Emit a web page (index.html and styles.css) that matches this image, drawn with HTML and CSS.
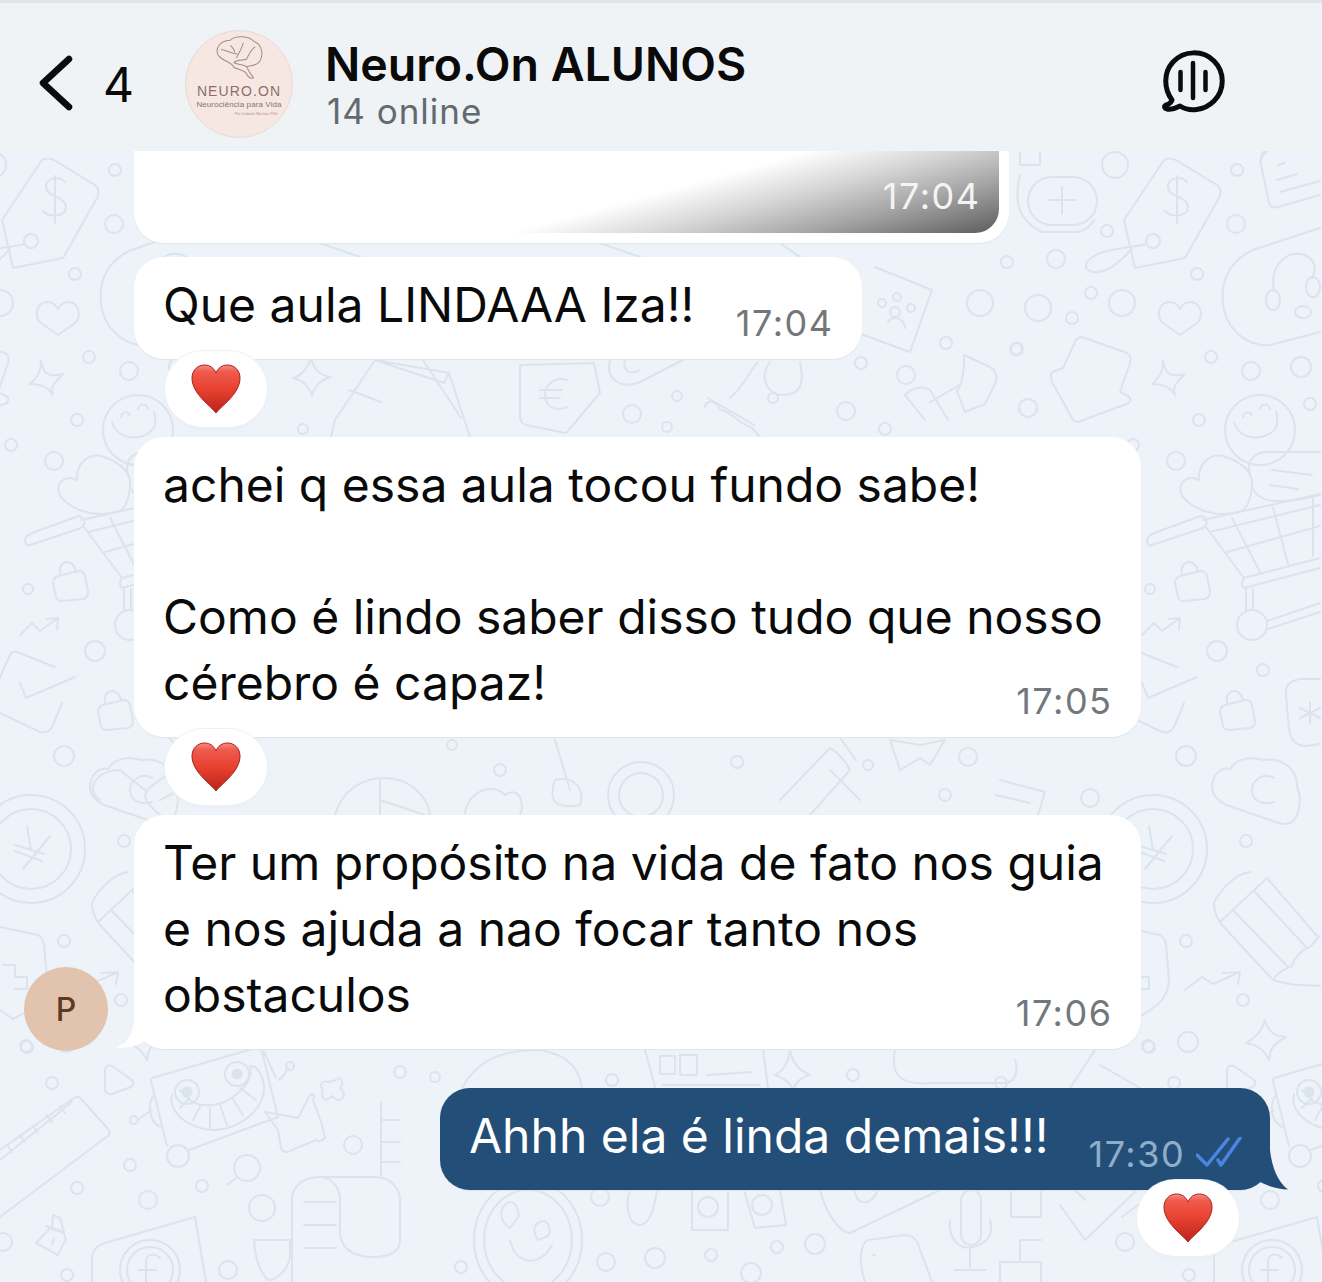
FILE: index.html
```html
<!DOCTYPE html>
<html lang="pt-BR">
<head>
<meta charset="utf-8">
<title>Neuro.On ALUNOS</title>
<link rel="stylesheet" href="styles.css">
</head>
<body>
<div class="phone">
  <header class="top">
    <svg class="chev" width="36" height="60" viewBox="0 0 36 60"><path d="M31 5 L5 29 L31 53" /></svg>
    <span class="count">4</span>
    <div class="logo">
      <svg class="brain" width="56" height="48" viewBox="0 0 62 56">
        <path d="M7 24C2 15 10 6 21 6C27 0 43 1 49 8C58 11 60 24 55 31C51 37 44 35 40 37C42 42 45 46 48 50C44 52 41 48 39 44C36 41 30 40 25 38C24 32 13 31 7 24Z"/>
        <path d="M10 17C17 18 23 22 29 22M36 9C35 15 31 20 28 27M50 14C45 16 43 22 40 28C36 30 30 28 25 32M21 12C24 15 26 17 26 20M25 32C28 35 36 34 40 37"/>
      </svg>
      <span class="logo-a">NEURO.ON</span>
      <span class="logo-b">Neurociência para Vida</span>
      <span class="logo-c">Por Izabela Martins PhD</span>
    </div>
    <div class="titles">
      <h1>Neuro.On ALUNOS</h1>
      <p>14 online</p>
    </div>
    <svg class="voice" width="66" height="66" viewBox="0 0 66 66">
      <path d="M12 52 C4 41 3 25 13 14 C24 2 43 2 54 13 C65 24 65 42 54 53 C44 63 29 64 20 58 C16 60 11 62 7 61 C4 60 4 58 6 57 C10 56 12 53 12 52Z"/>
      <path class="bars" d="M20.500 24V42M33 15V50M45.500 24V42"/>
    </svg>
  </header>

  <main class="chat">
    <svg class="doodles" viewBox="0 151 1322 1131" width="1322" height="1131" aria-hidden="true">
      <defs>
        <g id="tile">
          <path d="M2 220L42 160Q48 157 54 160L95 185Q101 190 97 198L63 258L13 268Z"/>
          <path d="M65 182C60 176 47 177 46 186C45 197 66 196 66 207C66 217 49 218 43 211M55 176V223"/>
          <circle cx="31" cy="241" r="7"/>
          <path d="M25 244C4 249 -24 248 -35 262C-40 273 -25 275 -12 268C-2 262 4 255 10 249"/>
          <circle cx="-7" cy="165" r="13"/><circle cx="115" cy="170" r="6"/><circle cx="114" cy="224" r="9"/><circle cx="-15" cy="231" r="6"/><circle cx="-66" cy="259" r="9"/><circle cx="-115" cy="262" r="6"/><circle cx="75" cy="274" r="6"/><circle cx="-31" cy="293" r="6"/><circle cx="0" cy="303" r="13"/><circle cx="-84" cy="308" r="13"/><circle cx="-50" cy="318" r="6"/><circle cx="-106" cy="349" r="6"/><circle cx="89" cy="357" r="6"/><circle cx="129" cy="371" r="9"/><circle cx="179" cy="367" r="10"/><circle cx="-94" cy="408" r="9"/><circle cx="77" cy="420" r="6"/><circle cx="188" cy="404" r="6"/>
          <path d="M58 335L41 323C34 317 36 303 47 302C53 302 56 305 58 309C60 305 64 302 69 302C79 303 82 316 75 323Z"/>
          <path d="M41 361C43 372 46 378 63 374C54 383 50 387 53 395C49 388 43 384 30 384C37 378 41 372 41 361Z"/>
          <rect x="-94" y="177" width="69" height="48" rx="24"/><path d="M-60 187V214M-74 200H-47"/>
          <path d="M-102 175C-108 200 -105 220 -80 232H-45C-35 230 -32 226 -28 220"/>
          <path d="M140 160Q137 152 146 150L198 150M146 150L138 160L147 203Q149 209 156 207L198 195M156 165L163 163M155 180L175 174M158 192L198 181"/>
          <path d="M198 228L131 250C105 262 97 285 102 310C108 333 128 347 148 345L198 332"/>
          <path d="M152 290C147 265 165 252 178 254C192 256 196 268 190 278"/>
          <ellipse cx="151" cy="300" rx="7" ry="10"/><ellipse cx="191" cy="287" rx="7" ry="10"/><ellipse cx="181" cy="312" rx="8" ry="6"/>
          <path d="M-70 372L-59 368L-47 342Q-44 335 -37 338L5 353Q10 356 8 363L-2 392L6 396Q10 398 7 403L-44 422Q-48 422 -50 418L-70 382Q-72 376 -70 372Z"/>
          <circle cx="138" cy="430" r="35"/><path d="M112 422C118 441 143 442 154 428C156 422 155 415 154 412M121 417C122 411 129 411 130 416M138 409C140 403 146 403 148 409"/>
          <path d="M66 502C50 490 62 472 77 480C76 462 90 452 104 457C118 462 131 470 130 485C129 500 125 510 117 512C100 516 80 514 66 502Z"/>
          <path d="M128 476C124 460 132 452 146 452H198M130 487C135 500 150 507 198 495M150 470L190 475M148 485L176 489"/>
          <path d="M30 545L81 528Q86 524 84 520Q80 514 76 517L32 533Q24 537 25 541Q26 547 30 545Z"/>
          <path d="M81 520L198 494M84 527L122 578L198 558M88 532L198 505M122 588L198 568M122 578Q118 585 122 588M110 518L138 572M151 508L166 564M191 496V556M105 552L198 526"/>
          <circle cx="130" cy="625" r="15"/><path d="M124 589V610M131 589V610M145 621L198 603M146 629L198 612"/>
          <circle cx="54" cy="461" r="9"/><circle cx="28" cy="589" r="5"/><circle cx="95" cy="651" r="10"/><circle cx="141" cy="670" r="6"/><circle cx="64" cy="756" r="10"/><circle cx="124" cy="841" r="6"/><circle cx="64" cy="941" r="6"/><circle cx="121" cy="1000" r="6"/><circle cx="66" cy="1042" r="10"/><circle cx="26" cy="1046" r="6"/>
          <circle cx="11" cy="445" r="6"/>
          <g id="lock"><path d="M58 576L78 571Q84 571 85 576L88 592Q88 598 83 599L62 601Q57 601 56 597L53 583Q53 578 58 576ZM60 574C58 562 68 560 72 564C74 566 76 570 76 572"/></g>
          <use href="#lock" x="45" y="129"/>
          <path d="M20 635L32 623L40 631L58 618M47 619L58 618L57 630"/>
          <path d="M55 667L17 652Q12 651 10 655L-10 700M-10 708L40 732Q48 734 52 727L62 703M20 683L26 698L75 677"/>
          <circle cx="31" cy="849" r="54"/><circle cx="31" cy="849" r="40"/>
          <path d="M27 826L31 850M50 836L23 869M15 845L44 854M15 851L42 861"/>
          <path d="M0 927L38 935Q43 938 44 944L47 980C47 1000 30 1010 13 1019L0 1010"/>
          <path d="M3 965H15V977H27V989H15"/>
          <path d="M128 872C112 874 97 892 92 903C92 912 96 920 100 925L151 980C165 985 180 985 198 986M145 878L195 936M98 922L145 878M111 910L165 966M133 892L185 948M151 980C155 972 165 968 170 966C172 958 180 950 185 948C190 948 192 940 198 936"/>
          <path d="M90 787C90 774 100 767 108 769C115 757 130 757 142 760C158 757 176 768 175 787C180 797 178 815 170 822C164 825 160 825 154 822L104 805C95 800 90 795 90 787Z"/>
          <path d="M152 778C142 772 130 780 130 790C130 802 142 805 152 802"/>
          <path d="M198 679H178Q162 682 164 695L167 730Q170 746 184 746L198 744M188 702V724M178 708L198 718M178 718L198 708"/>
          <path d="M63 990L80 977L91 984L118 972M101 973L118 972L116 984"/>
          <path d="M143 1020C146 1030 150 1036 164 1037C153 1043 148 1048 147 1060C142 1050 136 1045 124 1043C134 1038 140 1031 143 1020Z"/>
          <path d="M105 1070Q106 1064 112 1066L132 1080Q135 1083 131 1087L112 1094Q105 1095 105 1089Z"/>
          <circle cx="27" cy="1047" r="6"/><circle cx="52" cy="1083" r="6"/><circle cx="130" cy="1165" r="6"/><circle cx="77" cy="1188" r="6"/><circle cx="148" cy="1200" r="9"/><circle cx="202" cy="1186" r="6"/><circle cx="262" cy="1208" r="13"/><circle cx="353" cy="1145" r="9"/><circle cx="67" cy="1275" r="6"/><circle cx="228" cy="1270" r="9"/><circle cx="3" cy="1242" r="9"/><circle cx="178" cy="1156" r="11"/>
          <path d="M152 1078L256 1048Q261 1047 262 1052L278 1117L189 1150M167 1146L152 1085Q150 1080 152 1078M153 1096C148 1105 148 1120 160 1127M264 1052L276 1078M279 1080C284 1076 286 1072 288 1068M152 1110L140 1118"/>
          <circle cx="290" cy="1066" r="4"/><circle cx="134" cy="1120" r="4"/>
          <circle cx="187" cy="1092" r="12"/><circle cx="187" cy="1092" r="4.500" class="fill"/><circle cx="237" cy="1074" r="12"/><circle cx="237" cy="1074" r="4.500" class="fill"/>
          <path d="M172 1094C168 1110 185 1128 212 1130C240 1130 266 1108 264 1085C262 1072 255 1065 250 1066C254 1080 240 1095 222 1103C205 1108 190 1105 180 1090M180 1108L190 1098M193 1120L201 1105M210 1128V1108M227 1125L220 1105M243 1115L232 1098M256 1100L240 1088"/>
          <path d="M265 1112L298 1118L310 1095Q316 1092 313 1100L322 1125L325 1138Q320 1143 316 1140L292 1150Q284 1155 281 1148L278 1130Z"/>
          <path d="M328 1082L336 1080C340 1075 345 1082 340 1088C346 1092 345 1100 337 1100L332 1096C325 1103 320 1098 323 1090C319 1085 322 1080 328 1082Z"/>
          <path d="M0 1150L74 1098Q79 1095 82 1100L109 1130Q111 1136 105 1138L0 1217M0 1160L72 1102M12 1152L7 1145M25 1142L20 1135M38 1133L33 1126M52 1122L46 1115M65 1113L60 1106"/>
          <path d="M46 1226L64 1232L60 1218L53 1215L52 1230M36 1243L50 1228L64 1233L66 1240C62 1245 60 1252 58 1255ZM52 1244L54 1238"/>
          <circle cx="247" cy="1168" r="13"/><path d="M237 1177L227 1185"/>
          <path d="M92 1282V1256Q94 1246 105 1243L195 1217L206 1282"/>
          <circle cx="150" cy="1270" r="30"/><circle cx="150" cy="1270" r="23"/>
          <path d="M160 1258C154 1252 146 1254 146 1262V1282M139 1270H156"/>
          <path d="M292 1282V1200C292 1186 303 1177 320 1177H375C392 1177 400 1190 400 1200V1240C400 1250 392 1257 372 1257C350 1257 340 1245 340 1232V1200C340 1186 330 1177 320 1177M304 1202H336M304 1225H336M304 1248H336M381 1102V1177M381 1120H400M381 1142H400M381 1162H400"/>
          <path d="M254 1240H290V1256C288 1272 275 1280 268 1280C260 1272 255 1260 254 1240Z"/>
        </g>
      </defs>
      <use href="#tile"/>
      <use href="#tile" x="1122"/>
      <g>
        <path d="M311 357C313 368 318 375 331 377C320 380 315 386 312 396C309 386 303 380 293 378C303 375 308 368 311 357Z"/>
        <path d="M375 360L449 373L444 383L375 360M449 373L470 437M375 360L335 420L331 437M349 390L381 402"/>
        <path d="M423 360L461 418M520 365L594 363L600 393L566 433L526 425Q520 423 520 417Z"/>
        <path d="M567 380C555 376 545 385 545 395C545 407 556 412 567 407M540 390H562M540 398H560"/>
        <path d="M610 360C605 378 620 390 640 382L683 360M625 360C622 370 630 376 640 370"/>
        <circle cx="303" cy="429" r="5"/><circle cx="632" cy="414" r="9"/><circle cx="677" cy="396" r="5"/><circle cx="667" cy="427" r="5"/><circle cx="773" cy="398" r="5"/><circle cx="846" cy="411" r="9"/><circle cx="861" cy="363" r="6"/><circle cx="906" cy="375" r="9"/><circle cx="946" cy="343" r="6"/><circle cx="1017" cy="349" r="6"/><circle cx="1028" cy="408" r="9"/><circle cx="885" cy="429" r="6"/><circle cx="980" cy="303" r="13"/>
        <path d="M708 398L754 425M704 408C708 398 716 400 720 410C730 410 736 422 752 428L760 437M758 362C750 370 745 385 730 398M770 362C760 375 765 392 780 395C800 396 805 385 800 362"/>
        <path d="M964 355L990 367Q998 372 996 382L985 404L965 412L957 392Q965 378 964 355ZM905 395C912 388 922 385 930 390L948 420M930 402L960 385M905 395L925 420"/>
        <path d="M875 267L932 290L910 352L850 330"/><circle cx="895" cy="312" r="5"/><circle cx="882" cy="303" r="4"/><circle cx="897" cy="297" r="4"/><circle cx="911" cy="308" r="4"/><path d="M888 322C892 315 905 318 905 328"/>
        <path d="M210 775L160 800M180 765C150 790 130 790 160 815M100 800C85 790 95 770 120 770L145 790"/>
        <path d="M335 815C342 790 362 778 385 778C408 778 428 795 430 815M380 779V815M380 800L425 815"/>
        <circle cx="452" cy="745" r="5"/><circle cx="500" cy="770" r="6"/><path d="M465 815C465 795 490 780 505 795C520 785 525 805 520 815M555 780C548 800 555 810 580 805C585 790 575 775 555 780M555 740L570 790"/>
        <circle cx="641" cy="795" r="33"/><circle cx="641" cy="795" r="22"/><circle cx="737" cy="762" r="6"/><circle cx="868" cy="765" r="5"/><circle cx="968" cy="757" r="9"/><circle cx="1090" cy="798" r="9"/><circle cx="945" cy="795" r="6"/>
        <path d="M780 800L830 748C835 750 845 760 850 770L810 815M830 770L860 800M840 738L856 760"/>
        <path d="M890 740L920 745L945 740L930 765L920 758L900 770Z"/>
        <path d="M1000 780L1045 792L1038 815M996 795L1030 803"/>
        <circle cx="400" cy="1072" r="6"/><circle cx="435" cy="1077" r="5"/><circle cx="612" cy="1080" r="6"/><circle cx="853" cy="1075" r="6"/><circle cx="1001" cy="1083" r="6"/><circle cx="606" cy="1262" r="9"/><circle cx="655" cy="1258" r="10"/><circle cx="711" cy="1255" r="6"/><circle cx="777" cy="1247" r="6"/><circle cx="815" cy="1244" r="10"/><circle cx="751" cy="1273" r="10"/><circle cx="461" cy="1267" r="6"/><circle cx="600" cy="1197" r="9"/>
        <path d="M462 1088C480 1055 510 1050 540 1050C570 1055 580 1070 582 1088"/>
        <ellipse cx="528" cy="1240" rx="54" ry="60"/><ellipse cx="528" cy="1240" rx="44" ry="50"/>
        <path d="M507 1203C515 1198 520 1212 518 1218L510 1228C500 1222 498 1210 507 1203ZM540 1222C548 1218 552 1230 548 1236L538 1240C532 1232 534 1224 540 1222ZM510 1240C515 1265 540 1268 552 1245"/>
        <path d="M645 1050L655 1087M763 1050L768 1088M660 1056H675V1074H660ZM680 1055H697V1075H680ZM707 1075L751 1072M663 1085H760"/>
        <path d="M790 1050C792 1062 798 1070 810 1075C798 1078 795 1085 793 1090C790 1082 784 1078 775 1075C785 1070 788 1062 790 1050Z"/>
        <path d="M895 1050C890 1075 900 1085 930 1083H1000C1012 1085 1020 1075 1015 1060M1095 1050L1070 1088M1100 1065L1140 1088"/>
        <path d="M630 1190C625 1205 628 1225 640 1225C650 1225 655 1205 657 1190M692 1190V1230H728V1190M744 1190L755 1228L786 1225L780 1190"/>
        <circle cx="708" cy="1207" r="10"/><circle cx="762" cy="1205" r="10"/>
        <path d="M820 1190C825 1210 838 1232 850 1233L940 1190M855 1190C855 1205 870 1208 878 1190"/>
        <rect x="961" y="1190" width="20" height="55" rx="10"/><path d="M950 1220C948 1240 960 1250 972 1247C985 1245 995 1235 990 1220M970 1248V1268M955 1270H985"/>
        <path d="M865 1282C858 1260 860 1245 868 1240L905 1235C912 1235 918 1240 920 1250L932 1282M873 1255H875"/>
        <path d="M1011 1190H1041V1217H1011ZM1041 1240H1020V1262H1000V1282M1020 1262H1041V1282"/>
        <path d="M1060 1205L1085 1240L1137 1190M1075 1190L1085 1200"/>
        <path d="M1020 152V165H1040V152"/>
        <path d="M780 243L800 257M600 243L640 257M320 243L360 257"/>
      </g>
    </svg>

    <section class="msg in first">
      <div class="shade"><span class="time light">17:04</span></div>
    </section>

    <section class="msg in row gap-a">
      <p class="text">Que aula LINDAAA Iza!!</p>
      <span class="time">17:04</span>
    </section>
    <div class="react">
      <svg width="52" height="52" viewBox="0 0 52 52"><use href="#heart"/></svg>
    </div>

    <section class="msg in stack">
      <p class="text">achei q essa aula tocou fundo sabe!<br><br>Como é lindo saber disso tudo que nosso<br>cérebro é capaz!</p>
      <span class="time">17:05</span>
    </section>
    <div class="react">
      <svg width="52" height="52" viewBox="0 0 52 52"><use href="#heart"/></svg>
    </div>

    <div class="with-avatar">
      <div class="avatar">P</div>
      <section class="msg in stack tailed">
        <p class="text">Ter um propósito na vida de fato nos guia<br>e nos ajuda a nao focar tanto nos<br>obstaculos</p>
        <span class="time">17:06</span>
        <svg class="tail-l" width="50" height="31" viewBox="0 0 50 31"><path d="M18 0C18 14 12 25 0 29.500C10 30.500 22 28 31 22C36 27 42 30 50 30.500L50 0Z"/></svg>
      </section>
    </div>

    <section class="msg out row">
      <p class="text">Ahhh ela é linda demais!!!</p>
      <span class="time">17:30</span>
      <svg class="ticks" width="46" height="30" viewBox="0 0 46 30"><path d="M1 18L11 28L32 2M22 23L25 28L44 1"/></svg>
      <svg class="tail-r" width="50" height="40" viewBox="0 0 50 40"><path d="M30 0C32 18 38 32 48 39.500C38 39.500 28 36 20 32C14 37 7 39.500 0 39.500L0 0Z"/></svg>
    </section>
    <div class="react right">
      <svg width="52" height="52" viewBox="0 0 52 52"><use href="#heart"/></svg>
    </div>
  </main>

  <svg class="defs" width="0" height="0" aria-hidden="true">
    <defs>
      <linearGradient id="hg" x1="0" y1="0" x2="0" y2="1">
        <stop offset="0" stop-color="#f58d80"/>
        <stop offset=".14" stop-color="#ef5b4e"/>
        <stop offset=".5" stop-color="#e8412f"/>
        <stop offset="1" stop-color="#b9231b"/>
      </linearGradient>
      <g id="heart">
        <path d="M26 50C21 43 2 31 2 15C2 7 8 2 14.500 2C20 2 24 5 26 10C28 5 32 2 37.500 2C44 2 50 7 50 15C50 31 31 43 26 50Z" fill="url(#hg)" stroke="#a8201a" stroke-width="1"/>
      </g>
    </defs>
  </svg>
</div>
</body>
</html>
```

FILE: styles.css
```css
* { box-sizing: border-box; }
html, body { margin: 0; padding: 0; }
body { font-family: Inter, "Liberation Sans", sans-serif; background: #edf3f8; }
.phone { width: 1322px; height: 1282px; overflow: hidden; position: relative; }

.top {
  height: 151px;
  background: #eff3f6;
  border-top: 3px solid #e3e4e5;
  display: flex;
  align-items: center;
  padding: 12px 0 0 38px;
  color: #0a0a0a;
}
.chev { flex: none; margin-top: 2px; }
.chev path { fill: none; stroke: #0b0b0b; stroke-width: 6.500; stroke-linecap: round; stroke-linejoin: round; }
.count { font-size: 48px; font-weight: 400; margin: 4px 0 0 29px; width: 82px; line-height: 1; }
.logo {
  flex: none;
  width: 108px;
  height: 108px;
  border-radius: 50%;
  background: #f6e7e3;
  border: 1px solid #ead9d5;
  display: flex;
  flex-direction: column;
  align-items: center;
  padding-top: 4px;
  color: #8c6f6d;
  margin-top: 2px;
}
.brain path { fill: none; stroke: #a58c88; stroke-width: 1.200; stroke-linejoin: round; }
.brain { flex: none; margin-bottom: 0; }
.logo-a { font-size: 14px; letter-spacing: 1.100px; line-height: 16px; font-weight: 300; font-family: "Liberation Sans", sans-serif; }
.logo-b { font-size: 8px; line-height: 11px; font-family: "Liberation Sans", sans-serif; letter-spacing: .1px; }
.logo-c { font-size: 4px; line-height: 8px; align-self: flex-end; margin-right: 14px; color: #bd8f8f; font-family: "Liberation Sans", sans-serif; }
.titles { margin-left: 33px; margin-top: 1px; width: 834px; }
.titles h1 { margin: 0 0 0 -1px; font-size: 46.500px; line-height: 54px; font-weight: 600; }
.titles p { margin: 0 0 0 1px; font-size: 35px; line-height: 40px; color: #626a70; letter-spacing: 1px; }
.voice { flex: none; margin-top: -5px; }
.voice path { fill: none; stroke: #0b0b0b; stroke-width: 5; stroke-linecap: round; stroke-linejoin: round; }
.voice .bars { stroke-width: 4.500; }

.chat { position: relative; height: 1131px; display: flex; flex-direction: column; align-items: flex-start; }
.doodles { position: absolute; left: 0; top: 0; fill: none; stroke: #dbe4ec; stroke-width: 2; stroke-linecap: round; stroke-linejoin: round; }
.doodles .fill { fill: #dbe4ec; }
.defs { position: absolute; }

.msg { position: relative; border-radius: 30px; margin: 0 0 0 134px; box-shadow: 0 1px 1px #dfe5ec; }
.in { background: #fff; color: #0a0a0a; }
.text { margin: 0; font-size: 48px; line-height: 66px; white-space: nowrap; }
.time { font-size: 36px; line-height: 44px; color: #72777c; letter-spacing: 1.500px; margin-right: -1.500px; white-space: nowrap; }
.time.light { color: #f4f4f4; }

.first { width: 875px; height: 92px; border-radius: 0 0 30px 30px; margin-bottom: 14px; padding: 0 10px 10px 0; }
.shade {
  height: 82px;
  border-radius: 0 0 24px 24px;
  background: linear-gradient(164.700deg, #fff 58%, #d8d8d8 70%, #a2a2a2 84%, #5c5c5c 100%);
  display: flex;
  justify-content: flex-end;
  padding: 23px 20px 0 0;
}

.row { display: flex; align-items: flex-start; height: 102px; padding: 15px 30px 21px 29px; }
.row .time { margin-top: 29px; }
.gap-a { width: 728px; }
.gap-a .time { margin-left: auto; }

.stack { display: grid; width: 1007px; padding: 15px 30px 21px 29px; }
.stack > .text, .stack > .time { grid-area: 1 / 1; }
.stack > .time { justify-self: end; align-self: end; margin-bottom: -7px; }

.react {
  width: 102px;
  height: 76px;
  margin: -8px 0 10px 165px;
  border-radius: 38px;
  background: #fff;
  box-shadow: 0 0 0 1px #eef2f6, 0 2px 3px #e6ecf2;
  display: flex;
  align-items: center;
  justify-content: center;
  position: relative;
}
.react.right { margin: -10px 0 0 1137px; }

.with-avatar { display: flex; align-items: flex-end; padding-left: 24px; }
.avatar {
  width: 84px;
  height: 84px;
  flex: none;
  border-radius: 50%;
  background: #e2c3ae;
  color: #5d3a22;
  font-size: 32px;
  font-weight: 500;
  display: flex;
  align-items: center;
  justify-content: center;
  margin-bottom: -2px;
  position: relative;
}
.with-avatar .msg { margin-left: 26px; }
.tail-l { position: absolute; left: -18px; bottom: 0; fill: #fff; }

.out { background: #234e78; color: #fff; margin: 39px 0 0 440px; width: 830px; padding-left: 29px; }
.out .time { color: #90aeca; margin-left: 40px; }
.ticks { flex: none; margin: 34px 0 0 12px; }
.ticks path { fill: none; stroke: #4a86e0; stroke-width: 3.500; stroke-linecap: round; stroke-linejoin: round; }
.tail-r { position: absolute; left: 800px; bottom: 0; fill: #234e78; }
```
